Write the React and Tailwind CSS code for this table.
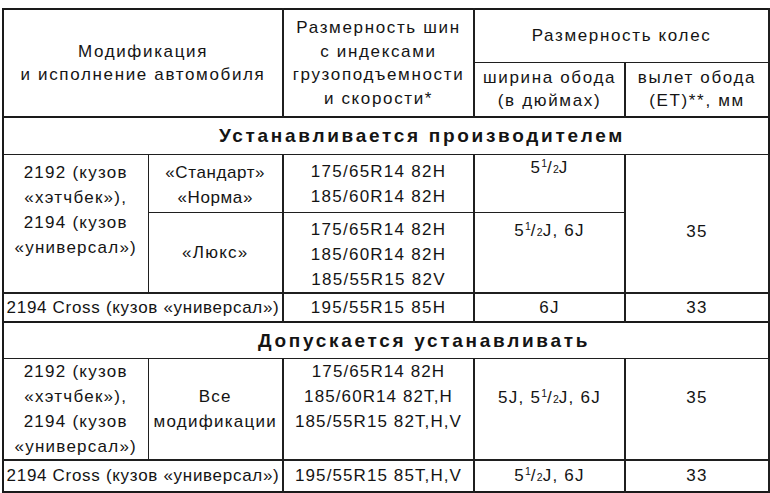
const Half = () => (
    <>
        5<span className="text-[10.5px] align-[6px] leading-none tracking-normal">1</span>/<span className="text-[10.5px] leading-none tracking-normal">2</span>
    </>
);

const th = 'border border-[#1f1f1f] text-center align-middle font-normal leading-[23.5px] tracking-[1.65px]';
const td = 'border border-[#1f1f1f] text-center leading-[25px] p-0';
const wide = 'border-x-2';
const major = 'border-t-2 border-t-[#1a1a1a]';
const bold = 'font-bold text-[19px] tracking-[2.7px]';

export default function App() {
    return (
        <div className="bg-white w-[770px] h-[493px] pt-[8px] pl-[2px] font-['Liberation_Sans',Arial,sans-serif] text-[17px] tracking-[1.25px] text-[#141414]">
            <table className="table-fixed border-collapse w-[766px] border-2 border-[#1a1a1a]">
                <colgroup>
                    <col className="w-[145px]" />
                    <col className="w-[135px]" />
                    <col className="w-[191px]" />
                    <col className="w-[151px]" />
                    <col className="w-[144px]" />
                </colgroup>
                <tbody>
                    <tr className="h-[53px]">
                        <td colSpan={2} rowSpan={2} className={th}>
                            Модификация<br />и исполнение автомобиля
                        </td>
                        <td rowSpan={2} className={`${th} ${wide}`}>
                            Размерность шин<br />с индексами<br />грузоподъемности<br />и скорости*
                        </td>
                        <td colSpan={2} className={`${th} ${wide}`}>Размерность колес</td>
                    </tr>
                    <tr className="h-[55px]">
                        <td className={`${th} ${wide}`}>ширина обода<br />(в дюймах)</td>
                        <td className={`${th} ${wide}`}>вылет обода<br />(ЕТ)**, мм</td>
                    </tr>

                    <tr className="h-[37px]">
                        <td colSpan={5} className={`${td} ${major} ${bold} pl-[72px]`}>
                            Устанавливается производителем
                        </td>
                    </tr>
                    <tr className="h-[58px]">
                        <td rowSpan={2} className={`${td} align-top pt-[5px] leading-[24.5px]`}>
                            2192 (кузов<br />«хэтчбек»),<br />2194 (кузов<br />«универсал»)
                        </td>
                        <td className={`${td} align-top pt-[5px] leading-[24px] tracking-[0.6px]`}>
                            «Стандарт»<br />«Норма»
                        </td>
                        <td className={`${td} ${wide} align-top pt-[4px]`}>
                            175/65R14 82H<br />185/60R14 82H
                        </td>
                        <td className={`${td} ${wide} align-top pt-[0px]`}>
                            <Half />J
                        </td>
                        <td rowSpan={2} className={`${td} ${wide} align-top pt-[64px]`}>35</td>
                    </tr>
                    <tr className="h-[81px]">
                        <td className={`${td} align-middle`}>«Люкс»</td>
                        <td className={`${td} ${wide} align-top pt-[4px]`}>
                            175/65R14 82H<br />185/60R14 82H<br />185/55R15 82V
                        </td>
                        <td className={`${td} ${wide} align-top pt-[5px]`}>
                            <Half />J, 6J
                        </td>
                    </tr>
                    <tr className="h-[29px]">
                        <td colSpan={2} className={`${td} border-t-2 tracking-[0.7px]`}>2194 Cross (кузов «универсал»)</td>
                        <td className={`${td} ${wide} border-t-2`}>195/55R15 85H</td>
                        <td className={`${td} ${wide} border-t-2`}>6J</td>
                        <td className={`${td} ${wide} border-t-2`}>33</td>
                    </tr>

                    <tr className="h-[36px]">
                        <td colSpan={5} className={`${td} ${major} ${bold} pl-[76px]`}>
                            Допускается устанавливать
                        </td>
                    </tr>
                    <tr className="h-[100px]">
                        <td className={`${td} align-middle leading-[24.5px]`}>
                            2192 (кузов<br />«хэтчбек»),<br />2194 (кузов<br />«универсал»)
                        </td>
                        <td className={`${td} align-middle leading-[24px]`}>
                            Все<br />модификации
                        </td>
                        <td className={`${td} ${wide} align-top pt-[0px] tracking-[1.1px]`}>
                            175/65R14 82H<br />185/60R14 82T,H<br />185/55R15 82T,H,V
                        </td>
                        <td className={`${td} ${wide} align-top pt-[26px]`}>
                            5J, <Half />J, 6J
                        </td>
                        <td className={`${td} ${wide} align-top pt-[26px]`}>35</td>
                    </tr>
                    <tr className="h-[32px]">
                        <td colSpan={2} className={`${td} border-t-2 tracking-[0.7px]`}>2194 Cross (кузов «универсал»)</td>
                        <td className={`${td} ${wide} border-t-2 tracking-[1.1px]`}>195/55R15 85T,H,V</td>
                        <td className={`${td} ${wide} border-t-2`}>
                            <Half />J, 6J
                        </td>
                        <td className={`${td} ${wide} border-t-2`}>33</td>
                    </tr>
                </tbody>
            </table>
        </div>
    );
}
